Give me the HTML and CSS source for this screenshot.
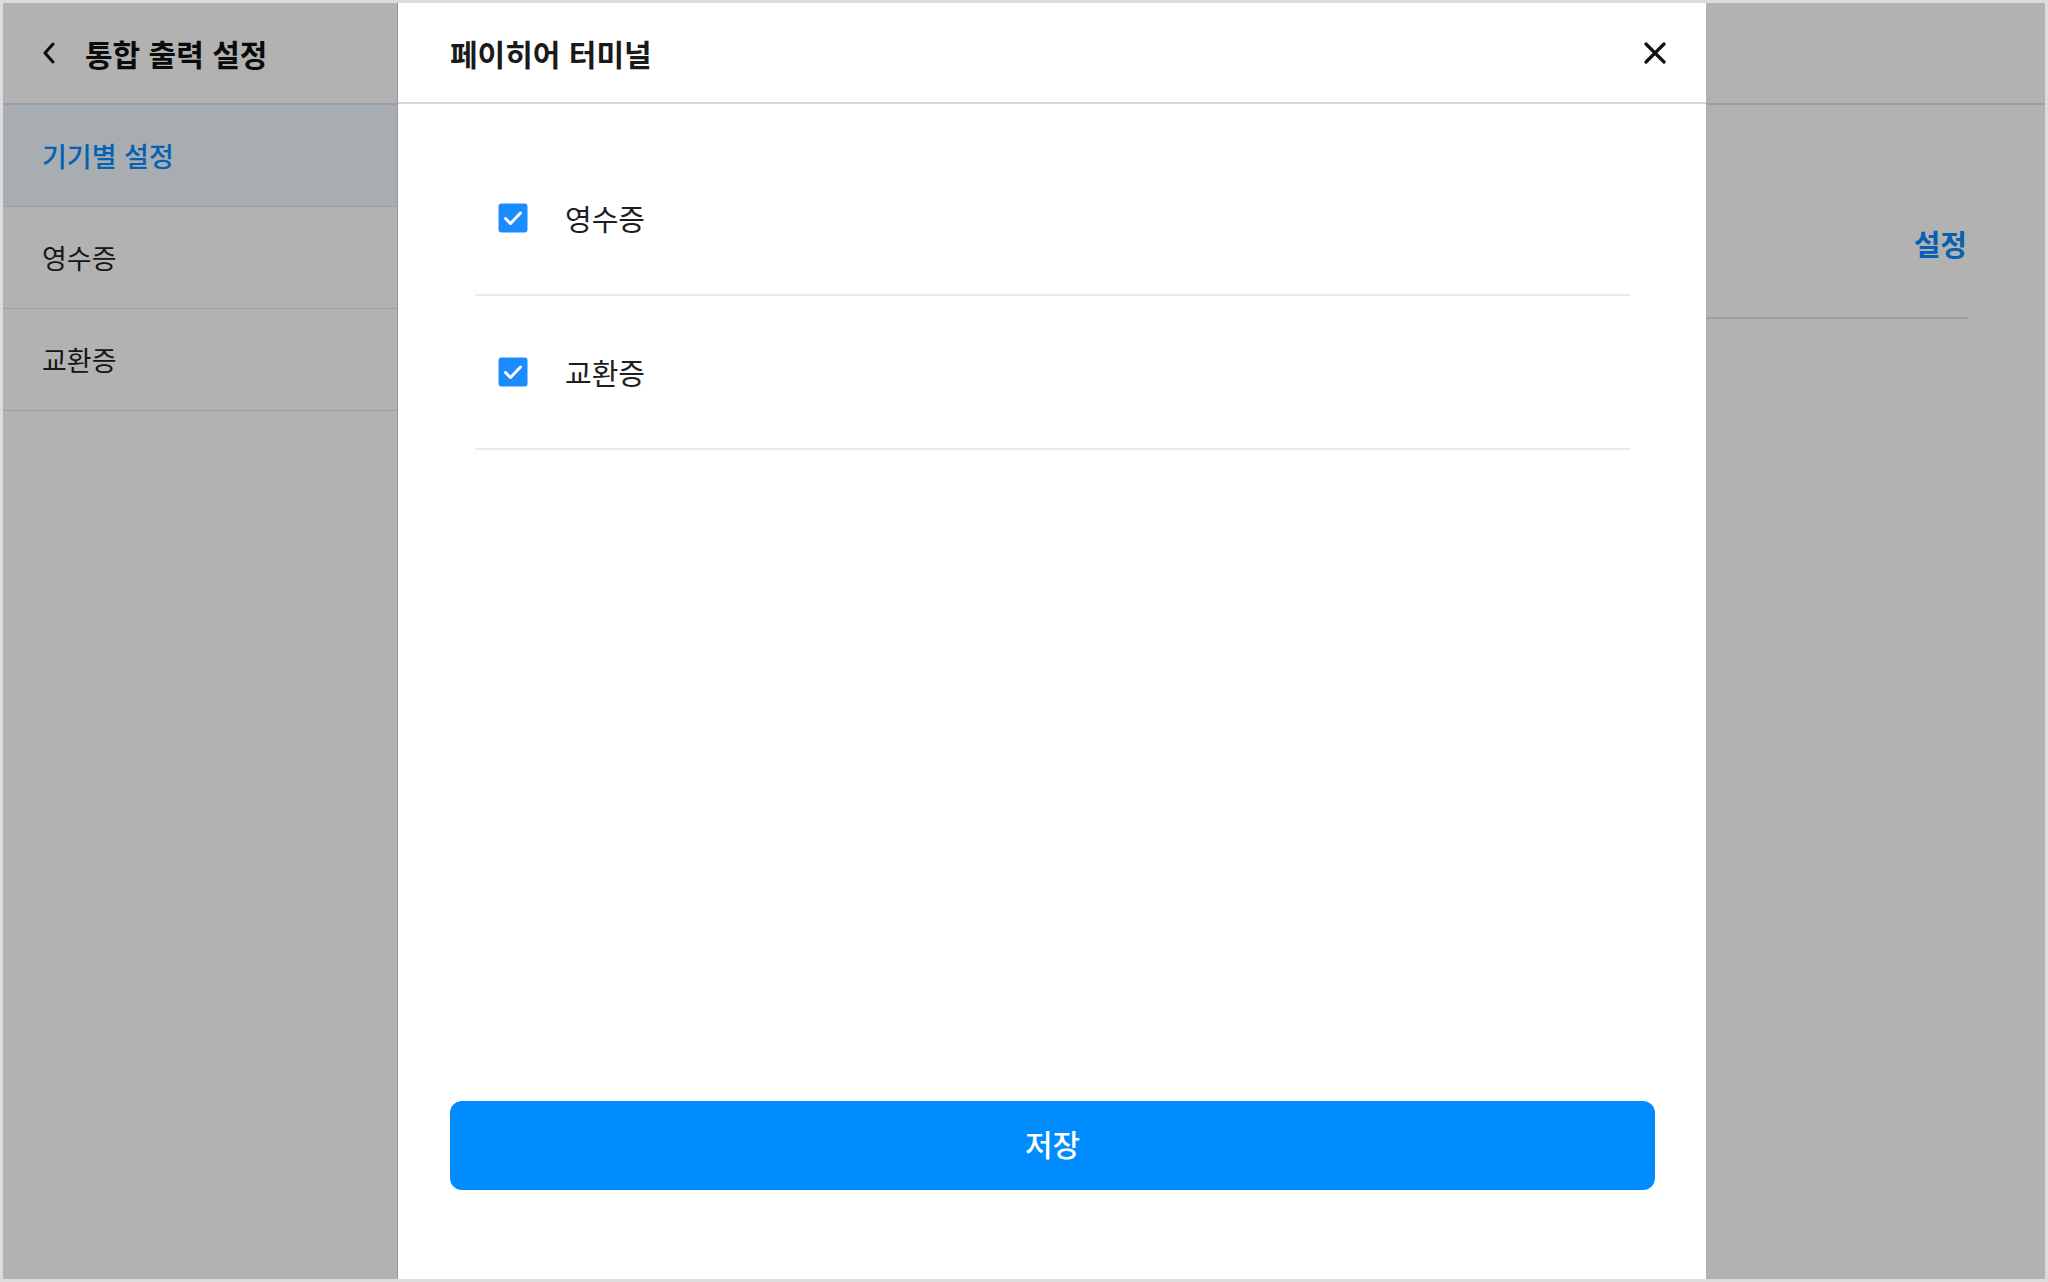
FILE: index.html
```html
<!DOCTYPE html>
<html lang="ko">
<head>
  <meta charset="utf-8">
  <title>통합 출력 설정</title>
  <link rel="stylesheet" href="styles.css">
</head>
<body>
  <div class="screen">
    <div class="page">
      <aside class="sidebar">
        <div class="sidebar-header">
          <svg class="back-icon" width="14" height="22" viewBox="0 0 14 22">
            <path d="M11 2 L3 11 L11 20" fill="none" stroke="#111" stroke-width="3" stroke-linecap="round" stroke-linejoin="round"/>
          </svg>
          <h1>통합 출력 설정</h1>
        </div>
        <ul class="nav">
          <li class="nav-item active">기기별 설정</li>
          <li class="nav-item">영수증</li>
          <li class="nav-item">교환증</li>
        </ul>
      </aside>
      <main class="main">
        <div class="main-header"></div>
        <div class="main-body">
          <div class="device-row">
            <span class="link">설정</span>
          </div>
        </div>
      </main>
    </div>

    <div class="dim"></div>

    <div class="drawer">
      <div class="drawer-header">
        <h2>페이히어 터미널</h2>
        <svg class="close-icon" width="22" height="22" viewBox="0 0 22 22">
          <path d="M2 2 L20 20 M20 2 L2 20" fill="none" stroke="#111" stroke-width="3.2" stroke-linecap="round"/>
        </svg>
      </div>
      <ul class="option-list">
        <li class="option">
          <svg class="check" width="30" height="30" viewBox="0 0 30 30">
            <rect x="0.5" y="0.5" width="29" height="29" rx="3" fill="#1a8cff"/>
            <path d="M7.5 15.5 L12.5 20.5 L22.5 10" fill="none" stroke="#fff" stroke-width="3" stroke-linecap="round" stroke-linejoin="round"/>
          </svg>
          <span class="option-label">영수증</span>
        </li>
        <li class="option">
          <svg class="check" width="30" height="30" viewBox="0 0 30 30">
            <rect x="0.5" y="0.5" width="29" height="29" rx="3" fill="#1a8cff"/>
            <path d="M7.5 15.5 L12.5 20.5 L22.5 10" fill="none" stroke="#fff" stroke-width="3" stroke-linecap="round" stroke-linejoin="round"/>
          </svg>
          <span class="option-label">교환증</span>
        </li>
      </ul>
      <div class="drawer-footer">
        <button class="save-btn">저장</button>
      </div>
    </div>
  </div>
</body>
</html>
```

FILE: styles.css
```css
html, body {
  margin: 0;
  padding: 0;
}
body {
  font-family: "Noto Sans CJK KR", "Noto Sans", sans-serif;
  color: #1a1a1a;
  background-color: #dcdcdc;
}
ul {
  list-style: none;
  margin: 0;
  padding: 0;
}
.screen {
  position: relative;
  width: 2048px;
  height: 1282px;
  border: 3px solid #dcdcdc;
  box-sizing: border-box;
  background-color: white;
  overflow: hidden;
}
.page {
  display: flex;
  height: 100%;
}

/* left menu */
.sidebar {
  width: 395px;
  border-right: 1px solid #d8d8d8;
  box-sizing: border-box;
}
.sidebar-header {
  height: 100px;
  display: flex;
  align-items: center;
  padding-left: 39px;
  gap: 29px;
  border-bottom: 2px solid #e2e2e8;
}
.sidebar-header h1 {
  margin: 0;
  font-size: 30px;
  font-weight: 700;
  color: #111;
}
.nav-item {
  height: 101px;
  display: flex;
  align-items: center;
  padding-left: 39px;
  font-size: 27px;
  color: #222;
  border-bottom: 1px solid #e4e4e4;
}
.nav-item.active {
  background-color: #f1f8ff;
  color: #0a8cff;
  font-weight: 500;
}

/* right content */
.main {
  flex: 1;
}
.main-header {
  height: 100px;
  border-bottom: 2px solid #e2e2e8;
}
.main-body {
  padding: 0 77px;
}
.device-row {
  height: 150px;
  margin-top: 62px;
  display: flex;
  justify-content: flex-end;
  align-items: center;
  border-bottom: 2px solid #e4e4e4;
}
.link {
  font-size: 29px;
  font-weight: 700;
  color: #0a8cff;
  margin-right: 1px;
  margin-top: 2px;
}

/* overlay + drawer */
.dim {
  position: absolute;
  inset: 0;
  background-color: rgba(0, 0, 0, 0.3);
}
.drawer {
  position: absolute;
  top: 0;
  bottom: 0;
  left: 395px;
  width: 1308px;
  background-color: white;
  display: flex;
  flex-direction: column;
}
.drawer-header {
  height: 99px;
  display: flex;
  align-items: center;
  justify-content: space-between;
  padding: 0 40px 0 52px;
  border-bottom: 2px solid #d6d6dc;
}
.drawer-header h2 {
  margin: 0;
  font-size: 30px;
  font-weight: 700;
  color: #1a1a1a;
}
.option-list {
  margin: 38px 76px 0 77px;
}
.option {
  height: 152px;
  display: flex;
  align-items: center;
  padding-left: 23px;
  gap: 37px;
  border-bottom: 2px solid #ebebeb;
}
.option-label {
  font-size: 29px;
  color: #1e1e1e;
}
.drawer-footer {
  margin-top: auto;
  padding: 0 51px 89px 52px;
}
.save-btn {
  width: 100%;
  height: 89px;
  padding: 0 0 5px;
  border: none;
  border-radius: 12px;
  background-color: #008cff;
  color: white;
  font-family: "Noto Sans CJK KR", "Noto Sans", sans-serif;
  font-size: 30px;
  font-weight: 500;
  cursor: pointer;
}
```
